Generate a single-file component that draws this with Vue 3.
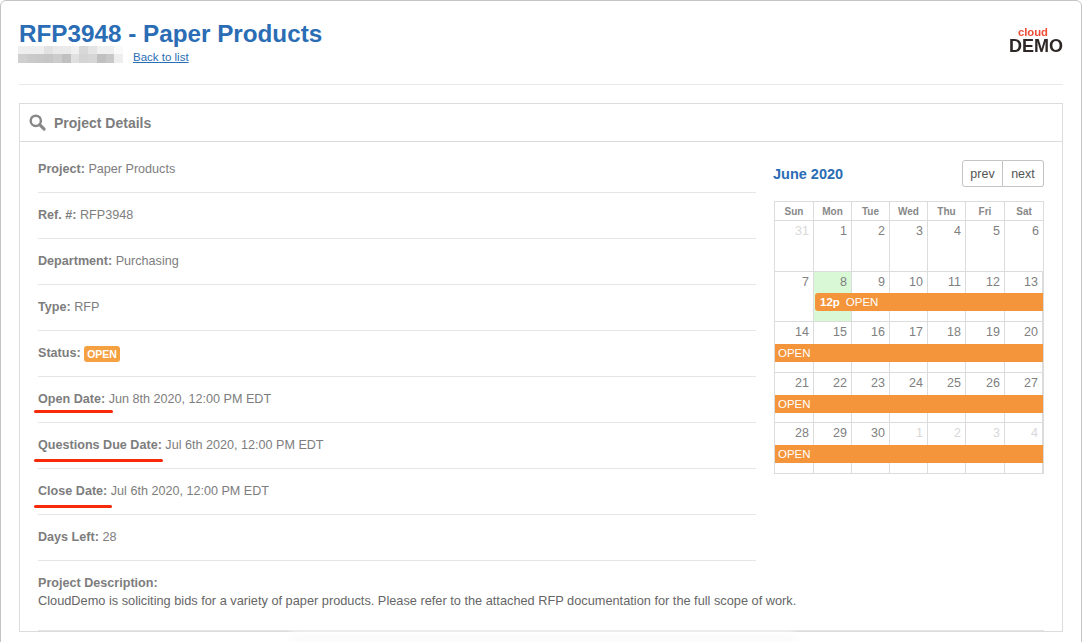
<template>
  <div class="page">
    <div class="window">
      <header class="top">
        <div>
          <h1 class="title">RFP3948 - Paper Products</h1>
          <div class="sub">
            <div class="blur">
              <span v-for="(c, i) in blurCells" :key="i" :style="{ background: c }"></span>
            </div>
            <a class="back">Back to list</a>
          </div>
        </div>
        <div class="logo">
          <span class="logo-cloud">cloud</span>
          <span class="logo-demo">DEMO</span>
        </div>
      </header>

      <section class="card">
        <div class="card-head">
          <svg class="search" viewBox="0 0 18 18" width="17" height="17">
            <circle cx="7.2" cy="7.2" r="5.4" fill="none" stroke="#888" stroke-width="2.6" />
            <path d="M11.3 11.3 L16 16" stroke="#888" stroke-width="3.2" stroke-linecap="round" />
          </svg>
          <span>Project Details</span>
        </div>

        <div class="card-body">
          <div class="columns">
            <div class="details">
              <div v-for="row in rows" :key="row.label" class="row">
                <b>{{ row.label }}:</b> {{ row.value }}
                <span v-if="row.badge" class="badge">{{ row.badge }}</span>
                <i
                  v-if="row.mark"
                  class="mark"
                  :style="{ width: row.mark + 'px', top: row.markTop + 'px' }"
                ></i>
              </div>
            </div>

            <div class="cal">
              <div class="cal-top">
                <div class="cal-title">June 2020</div>
                <div class="cal-btns">
                  <button>prev</button>
                  <button>next</button>
                </div>
              </div>
              <div class="cal-grid">
                <div class="cal-head">
                  <span v-for="d in days" :key="d">{{ d }}</span>
                </div>
                <div v-for="(week, w) in weeks" :key="w" class="week">
                  <div
                    v-for="cell in week.cells"
                    :key="cell.n + '-' + cell.off"
                    class="day"
                    :class="{ off: cell.off, today: cell.today }"
                  >{{ cell.n }}</div>
                  <div v-if="week.event" class="event" :class="{ start: week.event.time }">
                    <b v-if="week.event.time">{{ week.event.time }}</b>OPEN
                  </div>
                </div>
              </div>
            </div>
          </div>

          <div class="desc">
            <b>Project Description:</b><br />
            CloudDemo is soliciting bids for a variety of paper products. Please refer to the attached RFP documentation for the full scope of work.
          </div>
          <div class="desc-line"></div>
        </div>
      </section>
    </div>
    <div class="shade"></div>
  </div>
</template>

<script setup>
const rows = [
  { label: 'Project', value: 'Paper Products' },
  { label: 'Ref. #', value: 'RFP3948' },
  { label: 'Department', value: 'Purchasing' },
  { label: 'Type', value: 'RFP' },
  { label: 'Status', value: '', badge: 'OPEN' },
  { label: 'Open Date', value: 'Jun 8th 2020, 12:00 PM EDT', mark: 79, markTop: 33 },
  { label: 'Questions Due Date', value: 'Jul 6th 2020, 12:00 PM EDT', mark: 129, markTop: 36 },
  { label: 'Close Date', value: 'Jul 6th 2020, 12:00 PM EDT', mark: 78, markTop: 36 },
  { label: 'Days Left', value: '28' },
];

const days = ['Sun', 'Mon', 'Tue', 'Wed', 'Thu', 'Fri', 'Sat'];

const mkWeek = (start, event, off = []) => ({
  event,
  cells: start.map((n, i) => ({ n, off: off.includes(i), today: n === 8 })),
});

const weeks = [
  mkWeek([31, 1, 2, 3, 4, 5, 6], null, [0]),
  mkWeek([7, 8, 9, 10, 11, 12, 13], { time: '12p' }),
  mkWeek([14, 15, 16, 17, 18, 19, 20], {}),
  mkWeek([21, 22, 23, 24, 25, 26, 27], {}),
  mkWeek([28, 29, 30, 1, 2, 3, 4], {}, [3, 4, 5, 6]),
];

// redacted name under the title, pixelated
const blurCells = [
  '#eeeeee', '#eeeeee', '#eeeeee', '#e2e2e2', '#eaeaea', '#eaeaea', '#f0f0f0', '#d8d8d8', '#e4e4e4', '#f0f0f0', '#f0f0f0', '#fafafa',
  '#cfcfcf', '#cacaca', '#c8c8c8', '#c6c6c6', '#cccccc', '#c0c0c0', '#e0e0e0', '#d4d4d4', '#d6d6d6', '#c0c0c0', '#c8c8c8', '#eeeeee',
];
</script>

<style>
html, body { background: #fff; overflow: hidden; }
</style>

<style scoped>
.page {
  width: 1082px;
  height: 642px;
  position: relative;
  overflow: hidden;
  font-family: "Liberation Sans", Arial, sans-serif;
  font-size: 12.6px;
  color: #7d7d7d;
}

.window {
  height: 660px;
  box-sizing: border-box;
  border: 1px solid #c4c4c4;
  border-radius: 6px;
  padding: 0 18px;
  background: #fff;
}

.top {
  height: 83px;
  border-bottom: 1px solid #e8e8e8;
  display: flex;
  justify-content: space-between;
}

.title {
  margin: 19px 0 0;
  font-size: 24.25px;
  line-height: 28px;
  font-weight: 700;
  color: #2a6db5;
}

.sub {
  display: flex;
  align-items: flex-start;
  margin-top: -2px;
}

.blur {
  width: 105px;
  height: 17px;
  margin-left: -1px;
  margin-right: 10px;
  display: grid;
  grid-template-columns: repeat(12, 1fr);
  grid-template-rows: 8px 9px;
}

.back {
  color: #2a6db5;
  font-size: 11.5px;
  line-height: 14px;
  margin-top: 4px;
  text-decoration: underline;
}

.logo {
  width: 54px;
  margin-top: 26px;
  display: flex;
  flex-direction: column;
  align-items: flex-end;
  font-weight: 700;
  filter: blur(0.3px);
}

.logo-cloud {
  color: #ee4b33;
  font-size: 11.3px;
  line-height: 11px;
  margin-right: 15px;
}

.logo-demo {
  color: #2e2726;
  font-size: 18px;
  line-height: 17px;
}

.card {
  margin-top: 18px;
  border: 1px solid #dcdcdc;
}

.card-head {
  height: 37px;
  border-bottom: 1px solid #dcdcdc;
  display: flex;
  align-items: center;
  gap: 8px;
  padding-left: 9px;
  font-size: 14px;
  font-weight: 700;
  color: #7d7d7d;
}

.card-body {
  padding: 0 18px;
}

.columns {
  display: flex;
  gap: 18px;
}

.details {
  width: 718px;
}

.row {
  position: relative;
  height: 45px;
  line-height: 44px;
  border-bottom: 1px solid #e6e6e6;
  white-space: nowrap;
}

.row:first-child {
  padding-top: 5px;
}

.row b { font-weight: 700; }

.badge {
  display: inline-block;
  background: #f5a142;
  color: #fff;
  font-size: 10.5px;
  font-weight: 700;
  line-height: 14px;
  padding: 1px 3px;
  border-radius: 3px;
  vertical-align: -1px;
}

.mark {
  position: absolute;
  left: -4px;
  height: 3px;
  background: #f72a0a;
  border-radius: 2px;
}

.cal {
  width: 270px;
}

.cal-top {
  display: flex;
  justify-content: space-between;
  align-items: center;
  margin-top: 18px;
  height: 27px;
}

.cal-title {
  color: #2a6db5;
  font-size: 14.5px;
  font-weight: 700;
  margin: 1px 0 0 -1px;
}

.cal-btns {
  display: flex;
}

.cal-btns button {
  font: 12.5px "Liberation Sans", Arial, sans-serif;
  color: #555;
  background: #fff;
  border: 1px solid #c4c4c4;
  height: 27px;
  width: 41px;
  padding: 0;
}

.cal-btns button:first-child { border-radius: 3px 0 0 3px; }
.cal-btns button:last-child { border-radius: 0 3px 3px 0; border-left: none; }

.cal-grid {
  margin-top: 14px;
  border: 1px solid #dcdcdc;
  border-width: 1px 1px 0;
}

.cal-head {
  display: grid;
  grid-template-columns: 39px 38px 38px 38px 38px 39px 38px;
  height: 18px;
  border-bottom: 1px solid #dcdcdc;
}

.cal-head span {
  text-align: center;
  font-size: 10px;
  font-weight: 700;
  line-height: 20px;
  color: #888;
  border-right: 1px solid #dcdcdc;
}

.cal-head span:last-child { border-right: none; }

.week {
  position: relative;
  display: grid;
  grid-template-columns: 39px 38px 38px 38px 38px 39px 38px;
  height: 50.6px;
  border-bottom: 1px solid #dcdcdc;
  box-sizing: border-box;
}

.day {
  text-align: right;
  padding: 3px 4px 0 0;
  font-size: 12.5px;
  line-height: 15px;
  color: #808080;
  border-right: 1px solid #dcdcdc;
}

.day:last-child { border-right: none; }
.day.off { color: #d8d8d8; }
.day.today { background: #d9f9d6; }

.event {
  position: absolute;
  left: 0;
  right: 0;
  top: 22px;
  height: 18px;
  line-height: 18px;
  background: #f4953c;
  color: #fff;
  font-size: 11.5px;
  padding-left: 3px;
}

.event.start {
  left: 40px;
  top: 21px;
  padding-left: 5px;
  border-radius: 3px 0 0 3px;
}

.event b {
  margin-right: 6px;
  font-weight: 700;
}

.desc {
  margin-top: 13px;
  line-height: 17.3px;
  font-size: 12.77px;
  color: #666;
}

.desc b { color: #7d7d7d; font-size: 12.6px; }

.desc-line {
  margin-top: 20px;
  border-top: 1px solid #e4e4e4;
}

.shade {
  position: absolute;
  left: 290px;
  width: 505px;
  bottom: 0;
  height: 10px;
  background: linear-gradient(#fff, #f8f8f8);
  filter: blur(3px);
}
</style>
